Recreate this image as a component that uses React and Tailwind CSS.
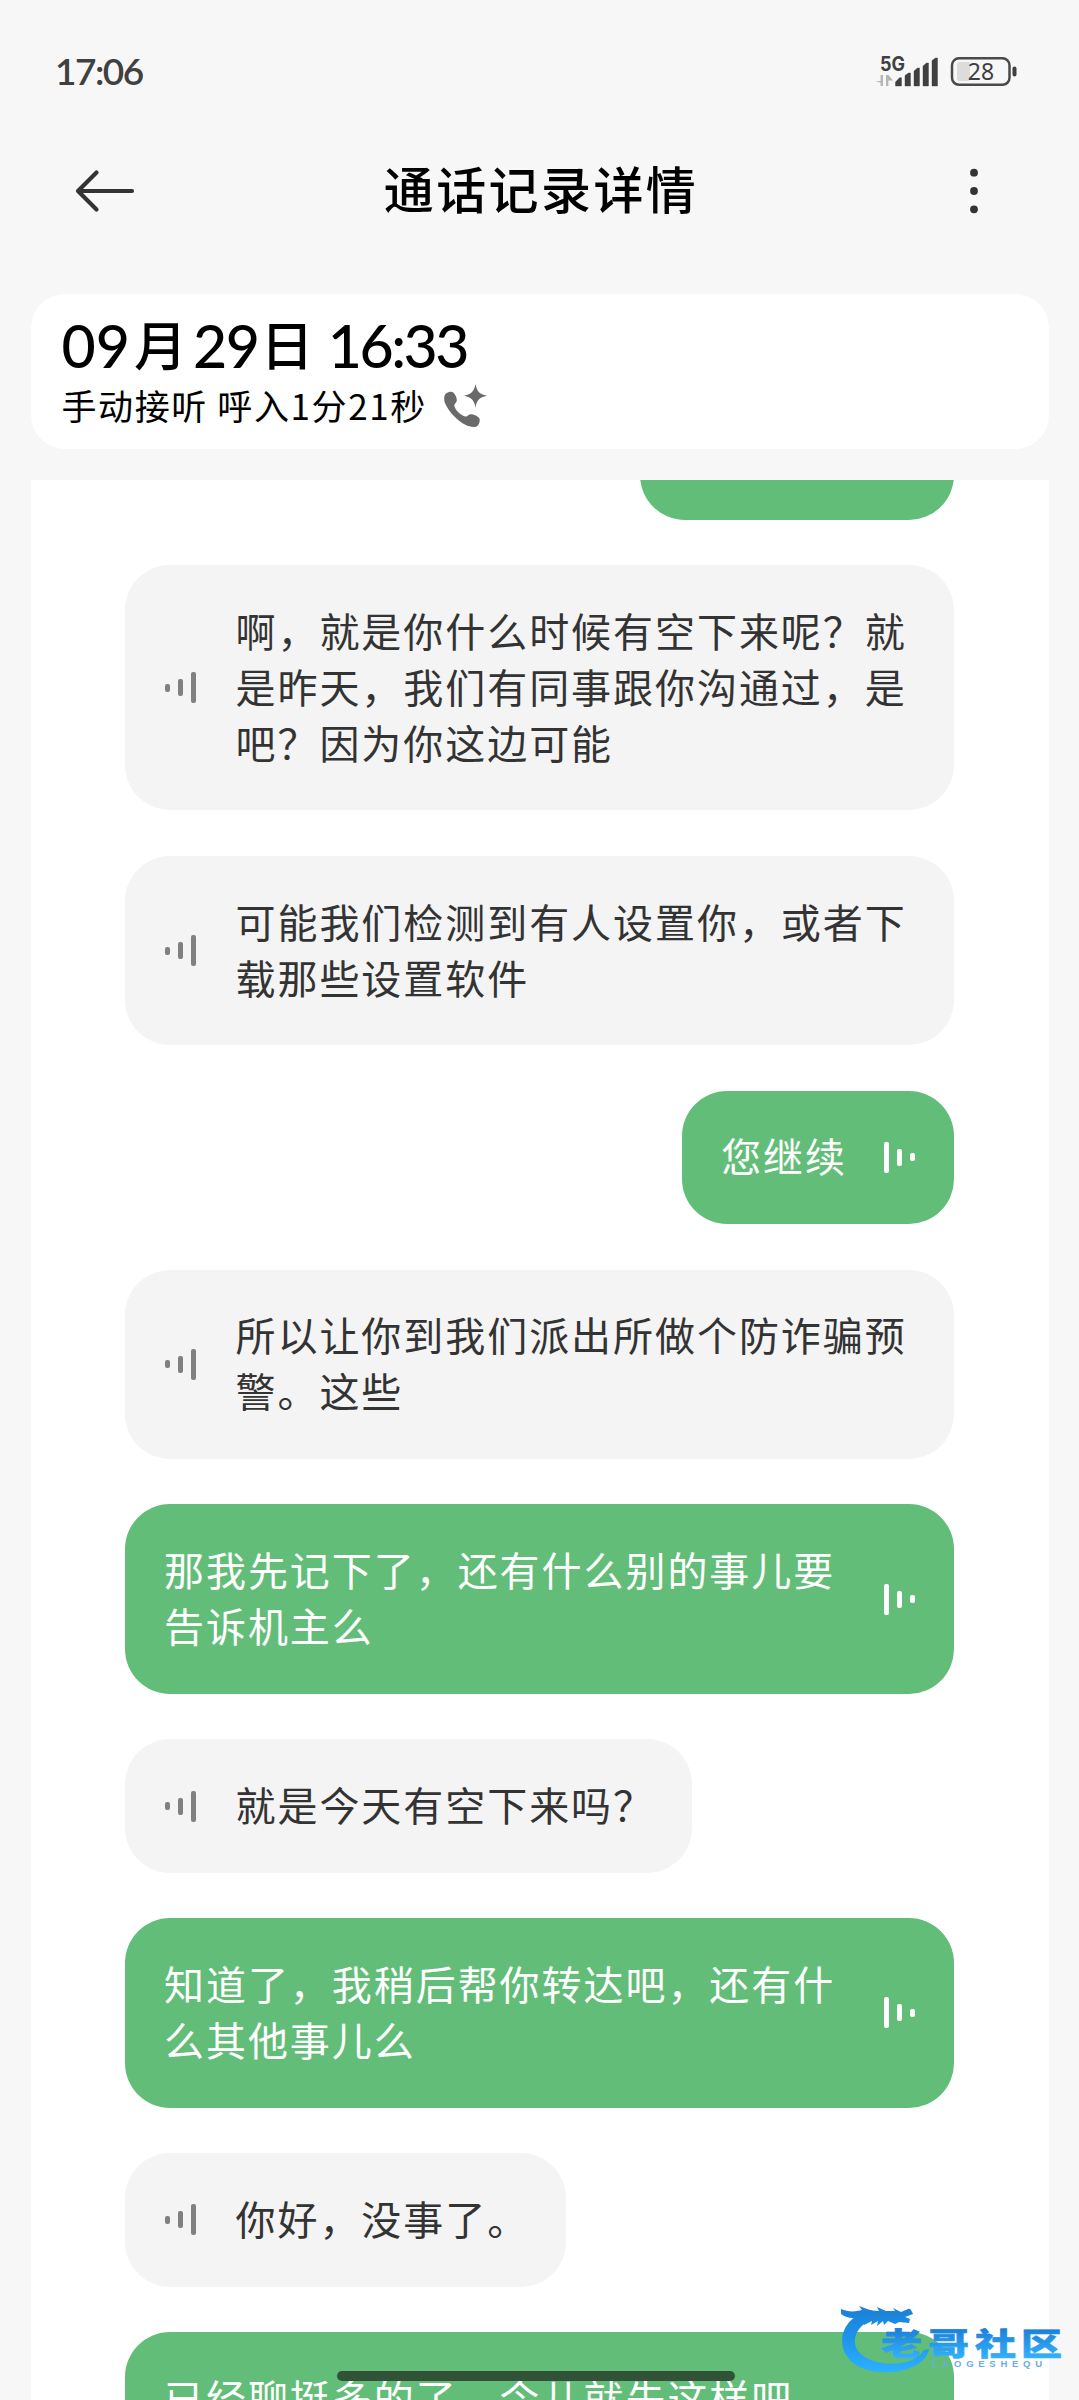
import React from "react";

const messages = [
  { side: "in", wide: true, lines: ["啊，就是你什么时候有空下来呢？就", "是昨天，我们有同事跟你沟通过，是", "吧？因为你这边可能"] },
  { side: "in", wide: true, lines: ["可能我们检测到有人设置你，或者下", "载那些设置软件"] },
  { side: "out", lines: ["您继续"] },
  { side: "in", wide: true, lines: ["所以让你到我们派出所做个防诈骗预", "警。这些"] },
  { side: "out", wide: true, lines: ["那我先记下了，还有什么别的事儿要", "告诉机主么"] },
  { side: "in", lines: ["就是今天有空下来吗？"] },
  { side: "out", wide: true, lines: ["知道了，我稍后帮你转达吧，还有什", "么其他事儿么"] },
  { side: "in", lines: ["你好，没事了。"] },
  { side: "out", wide: true, lines: ["已经聊挺多的了，今儿就先这样吧", "\u00a0"] },
];

function Bars({ out }) {
  const order = out ? "flex-row-reverse" : "flex-row";
  const color = out ? "bg-white" : "bg-[#808080]";
  return (
    <div className={`flex h-8 w-[31px] shrink-0 items-center justify-between ${order}`}>
      <span className={`h-2 w-[5px] rounded-[2px] ${color}`} />
      <span className={`h-[17px] w-[5px] rounded-[2px] ${color}`} />
      <span className={`h-[31px] w-[5px] rounded-[2px] ${color}`} />
    </div>
  );
}

function Bubble({ message }) {
  const out = message.side === "out";
  const width = message.wide ? "w-full" : "";
  const text = (
    <p className="-mt-[2px] mb-[2px] text-[40px] leading-[56px] tracking-[1.950px] whitespace-nowrap">
      {message.lines.map((line) => (
        <span key={line} className="block">{line}</span>
      ))}
    </p>
  );
  if (out) {
    return (
      <div className={`flex shrink-0 items-center justify-between gap-[36.500px] self-end rounded-[45px] bg-[#62bd78] py-[38.75px] pr-[39.500px] pl-[39px] text-white ${width}`}>
        {text}
        <Bars out />
      </div>
    );
  }
  return (
    <div className={`flex shrink-0 items-center gap-[39.500px] self-start rounded-[45px] bg-[#f4f4f4] py-[38.75px] pr-[37px] pl-10 text-[#333] ${width}`}>
      <Bars />
      {text}
    </div>
  );
}

function Signal() {
  return (
    <svg className="h-[36px] w-[66px]" viewBox="875 53 66 36">
      <text x="880" y="70.500" fontSize="20" fontWeight="700" fill="#404040" textLength="25" lengthAdjust="spacingAndGlyphs" fontFamily="Inter, sans-serif">5G</text>
      <path d="M883 75v11h-2.400v-3.200L875.600 81h5V75zM886 86V75h2.400l4.600 5.500h-4.600V86z" fill="#b5b5b5" />
      <path d="M895.500 86v-4l4-4.300h2V86zM905 86V75.500l3.500-2.500h2V86zM914 86V71l3.500-3h2v18zM923 86V66l3.500-3h2v23zM932 86V60.500l3.500-2.500h2V86z" fill="#404040" stroke="#404040" strokeWidth=".4" strokeLinejoin="round" />
    </svg>
  );
}

function Battery() {
  return (
    <svg className="h-[36px] w-[68px]" viewBox="950 53 68 36">
      <rect x="957" y="62" width="13" height="19" rx="2" fill="#dcdcdc" />
      <rect x="952" y="58.300" width="57.500" height="26.500" rx="7" fill="none" stroke="#4a4a4a" strokeWidth="2.500" />
      <rect x="1012.500" y="66.500" width="4" height="10" rx="2" fill="#404040" />
      <text x="981" y="80" textAnchor="middle" fontSize="23" fill="#404040" fontFamily="Noto Sans, sans-serif">28</text>
    </svg>
  );
}

function CallIcon() {
  return (
    <svg className="h-11 w-11" viewBox="443 385 44 44" fill="#6a6a6a">
      <path d="M446 394.500c2.500-1.700 6-2.300 7.500-.8 2 2 3.600 5.300 3.300 8-.2 2-2.800 3-2.500 5 .8 4.500 7 10 11 10.700 2.200.4 3.300-2.200 5.500-2.200 3 0 7 1.800 8.500 4 1 1.600.3 5.300-1.500 7.300-2.300 2.400-8 1.700-12.500-.7-8.500-4.500-16.500-13-20-21-1.500-3.600-1.600-8.600.7-10.300z" />
      <path d="M475.500 385c1.500 7.500 3.500 10 11.500 11.800-8 1.800-10 4.200-11.500 11.700-1.500-7.500-3.800-9.900-11.500-11.700 7.700-1.800 10-4.300 11.500-11.800z" />
    </svg>
  );
}

function Watermark() {
  return (
    <svg className="absolute top-[2300px] left-[838px] h-[78px] w-[228px]" viewBox="838 2300 228 78">
      <defs>
        <linearGradient id="ink" x1="0" y1="2305" x2="0" y2="2372" gradientUnits="userSpaceOnUse">
          <stop offset="0" stopColor="#1a7fd4" />
          <stop offset=".5" stopColor="#1f93ec" />
          <stop offset="1" stopColor="#2bb2ff" />
        </linearGradient>
        <linearGradient id="word" x1="0" y1="2327" x2="0" y2="2358" gradientUnits="userSpaceOnUse">
          <stop offset="0" stopColor="#1a7dd6" />
          <stop offset="1" stopColor="#35b0fa" />
        </linearGradient>
      </defs>
      <g fill="url(#ink)">
        <path d="M841 2309c7 3 14 3 21 1l-3-4c7 3 14 5 20 5l-2-4 9 4 9 0-2-3 8 4 7-3c2-1 3 1 4 3l1 2-8 3 5 2-1 4-10-1-4 2-7-3-4 4-1-4-6 5 1-5-7 4 1-4-8 4-4-7c-7 1-14 0-19-4z" />
        <path d="M868 2311C834 2320 833 2361 868 2370C896 2377 926 2367 929 2349L924 2350C917 2361 900 2366 882 2363C850 2358 844 2332 876 2316Z" />
      </g>
      <text y="2354.500" fontSize="31" fontWeight="900" fill="url(#word)" stroke="url(#word)" strokeWidth=".6" fontFamily="'Noto Sans CJK SC', sans-serif">
        <tspan x="881" textLength="41" lengthAdjust="spacingAndGlyphs">老</tspan>
        <tspan x="928" textLength="41" lengthAdjust="spacingAndGlyphs">哥</tspan>
        <tspan x="975" textLength="41" lengthAdjust="spacingAndGlyphs">社</tspan>
        <tspan x="1021" textLength="41" lengthAdjust="spacingAndGlyphs">区</tspan>
      </text>
      <text x="932" y="2366.500" fontSize="9.500" fontWeight="700" fill="#6aaee4" textLength="110" fontFamily="'Liberation Sans', sans-serif">LAOGESHEQU</text>
    </svg>
  );
}

export default function App() {
  return (
    <div className="relative flex h-[2400px] w-[1079px] flex-col overflow-hidden bg-[#f7f7f7] font-['Noto_Sans_CJK_SC',sans-serif] text-black">
      <div className="flex h-[142px] items-center justify-between pr-[61px] pl-[55px]">
        <span className="font-['Lato'] text-[37px] font-semibold tracking-[-1.500px] text-[#404040]">17:06</span>
        <div className="flex items-center gap-[9px]">
          <Signal />
          <Battery />
        </div>
      </div>

      <header className="flex h-[97px] items-center justify-between pr-[97px] pl-[75px]">
        <svg className="h-[44px] w-[60px]" viewBox="0 0 60 44" fill="none" stroke="#333" strokeWidth="4.200" strokeLinecap="round" strokeLinejoin="round">
          <path d="M57 22H3M21.500 3.500L3 22l18.500 18.500" />
        </svg>
        <h1 className="mr-[19px] mb-[8px] text-[50px] leading-[60px] font-medium tracking-[2.400px]">通话记录详情</h1>
        <svg className="h-[46px] w-4" viewBox="0 0 16 46" fill="#333">
          <circle cx="8" cy="4.700" r="3.900" />
          <circle cx="8" cy="23" r="3.900" />
          <circle cx="8" cy="41.300" r="3.900" />
        </svg>
      </header>

      <section className="mx-[30.500px] mt-[55px] flex h-[155px] flex-col rounded-[34px] bg-white pt-[20px] pl-[31px]">
        <div className="flex h-[64px] items-center text-[53px] font-medium whitespace-pre">
          <span className="mr-[4px] font-['Lato'] text-[59px]">09</span>
          <span className="mr-[6px] mb-1">月</span>
          <span className="mr-[2px] font-['Lato'] text-[59px] tracking-[-1.500px]">29</span>
          <span className="mr-[2px] mb-1">日</span>
          <span className="font-['Lato'] text-[59px] tracking-[-2.500px]"> 16:33</span>
        </div>
        <div className="flex h-[56px] items-center gap-[16px]">
          <span className="mb-[2px] text-[35px] leading-[56px] tracking-[1.600px]">手动接听 呼入1分21秒</span>
          <CallIcon />
        </div>
      </section>

      <main className="mx-[30.500px] mt-[31px] flex h-[1920px] flex-col gap-[45.375px] overflow-hidden bg-white px-[94.500px]">
        <div className="-mt-10 h-[79.600px] w-[314px] shrink-0 self-end rounded-b-[45px] bg-[#62bd78]" />
        {messages.map((message) => (
          <Bubble key={message.lines[0]} message={message} />
        ))}
      </main>

      <div className="absolute top-[2371px] left-[337px] h-2.5 w-[398px] rounded-full bg-[#325238]" />
      <Watermark />
    </div>
  );
}
